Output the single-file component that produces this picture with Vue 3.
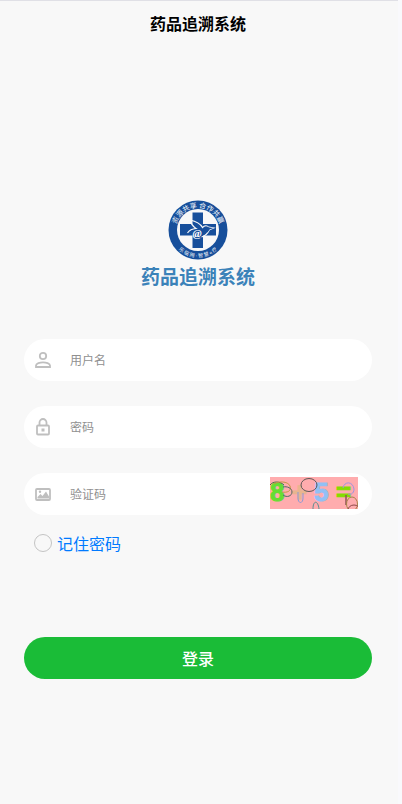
<template>
  <div class="login-page">
    <header class="nav-bar">
      <h1 class="nav-title">药品追溯系统</h1>
    </header>

    <main class="login-content">
      <div class="brand">
        <svg class="brand-logo" viewBox="0 0 60 60" role="img" aria-label="药品追溯系统">
          <defs>
            <path id="arc-top" d="M 7.800 30 A 22.200 22.200 0 0 1 52.200 30" />
            <path id="arc-bottom" d="M 2.500 30 A 27.500 27.500 0 0 0 57.500 30" />
          </defs>
          <circle cx="30" cy="30" r="29.500" fill="#174f9b" />
          <circle cx="30" cy="30" r="21" fill="#f8f8f8" />
          <path d="M24.500 12.500h10.500v11.500h13v11.500h-13v12.500h-10.500v-12.500h-12.500v-11.500h12.500z" fill="#174f9b" />
          <path
            d="M22 20c5 1 10 3 12.500 7.500 2-2 4-2 6-.3l5 .8-4 1.600c-1.500 3.400-4 6.400-8 7.400M22 20c1 4 3 6.500 6 8.500-3.500.2-6.500 1.500-8.500 4.500"
            fill="none"
            stroke="#f8f8f8"
            stroke-width="1.200"
          />
          <path d="M36 27.500c2-1.500 3.500-1.300 5 0l4.500.5-4 1.600-2 3z" fill="#174f9b" />
          <text x="29" y="37" class="logo-at">@</text>
          <text class="logo-text">
            <textPath href="#arc-top" startOffset="50%" text-anchor="middle">资源共享 合作共赢</textPath>
          </text>
          <text class="logo-text logo-text-small">
            <textPath href="#arc-bottom" startOffset="50%" text-anchor="middle">乐 临 网 · 智 慧 e 疗</textPath>
          </text>
        </svg>
        <h2 class="brand-name">药品追溯系统</h2>
      </div>

      <form class="login-form" @submit.prevent="handleLogin">
        <div class="form-item">
          <svg class="item-icon" viewBox="0 0 18 18" aria-hidden="true">
            <circle cx="9" cy="5" r="3.200" />
            <path d="M2 16v-1.500c0-2 4-3.200 7-3.200s7 1.200 7 3.200v1.500z" />
          </svg>
          <input v-model="form.username" type="text" class="item-input" placeholder="用户名" aria-label="用户名" />
        </div>

        <div class="form-item">
          <svg class="item-icon" viewBox="0 0 18 18" aria-hidden="true">
            <rect x="3" y="7.500" width="12" height="9" rx="1" />
            <path d="M5.500 7.500v-3a3.500 3.500 0 0 1 7 0v3" />
            <rect x="7.500" y="10.500" width="3" height="3" class="solid" />
          </svg>
          <input v-model="form.password" type="password" class="item-input" placeholder="密码" aria-label="密码" />
        </div>

        <div class="form-item">
          <svg class="item-icon" viewBox="0 0 18 18" aria-hidden="true">
            <rect x="2" y="4" width="14" height="11" rx="1" />
            <path d="M3.500 13.500v-1.500l3-3 2 2 3.500-4.500 3 5v2z" class="solid" />
            <circle cx="6" cy="6.800" r="1.200" class="solid" />
          </svg>
          <input v-model="form.code" type="text" class="item-input" placeholder="验证码" aria-label="验证码" />
          <button type="button" class="captcha" title="刷新验证码">
            <svg viewBox="0 0 88 32" aria-hidden="true">
              <rect width="88" height="32" fill="#ffacae" />
              <g class="captcha-text">
                <text x="0" y="24" fill="#65dd32" stroke="#65dd32">8</text>
                <text x="22" y="24" fill="#e8b58f" stroke="#e8b58f">+</text>
                <text x="44" y="24" fill="#91c0f5" stroke="#91c0f5">5</text>
                <text x="66" y="24" fill="#85dc00" stroke="#85dc00">=</text>
              </g>
              <g fill="none" stroke-width="1">
                <path d="M0 8c3-4 10-4 14 0" stroke="#4b7045" />
                <path d="M4 7c4-3 14-3 16 2s-3 7-8 6" stroke="#c39842" />
                <path d="M13 10c4-1 9 1 9 5s-5 6-9 3" stroke="#4f6862" />
                <ellipse cx="39" cy="8" rx="8" ry="6.500" stroke="#5c5755" />
                <path d="M28 15v6c0 6 5 6 5 0v-5" stroke="#8999d8" />
                <path d="M43 32c0-9 5-9 6 0" stroke="#598e91" />
                <path d="M73 11c1-7 10-7 11 1 0 5-4 6-6 5" stroke="#a292de" />
                <path d="M76 18v10" stroke="#8f5454" stroke-width="1.500" />
                <ellipse cx="82" cy="27" rx="5.500" ry="7" stroke="#a78448" />
                <ellipse cx="84" cy="33" rx="6" ry="5" stroke="#8f4949" />
              </g>
            </svg>
          </button>
        </div>

        <label class="remember">
          <input v-model="form.remember" type="checkbox" class="remember-box" />
          <span>记住密码</span>
        </label>

        <button type="submit" class="login-btn">登录</button>
      </form>
    </main>
  </div>
</template>

<script setup>
import { reactive } from 'vue';

const emit = defineEmits(['login']);

const form = reactive({
  username: '',
  password: '',
  code: '',
  remember: false
});

function handleLogin() {
  emit('login', { ...form });
}
</script>

<style>
body {
  background: #f9f9fc;
}
</style>

<style scoped>
.login-page {
  box-sizing: border-box;
  min-height: 100vh;
  margin-right: 4px;
  border-top: 1px solid #e0e0e6;
  padding-right: 2px;
  background: #f8f8f8;
  font-family: "Noto Sans CJK SC", sans-serif;
}

.nav-bar {
  display: flex;
  align-items: center;
  justify-content: center;
  height: 44px;
}

.nav-title {
  margin: 0;
  font-size: 16px;
  font-weight: 700;
  line-height: 24px;
  color: #000;
}

.login-content {
  padding: 155px 24px 0;
}

.brand {
  display: flex;
  flex-direction: column;
  align-items: center;
}

.brand-logo {
  width: 60px;
  height: 60px;
}

.logo-text {
  font-family: "Liberation Serif", "Noto Sans CJK SC", serif;
  font-size: 7px;
  fill: #fff;
}

.logo-text-small {
  font-size: 5px;
}

.logo-at {
  font-family: "Liberation Serif", serif;
  font-size: 11px;
  font-style: italic;
  font-weight: 700;
  text-anchor: middle;
  fill: #fff;
}

.brand-name {
  margin: 2px 0 0;
  font-size: 19px;
  font-weight: 700;
  line-height: 28px;
  color: #3b82b9;
}

.login-form {
  display: flex;
  flex-direction: column;
  gap: 25px;
  margin-top: 49px;
}

.form-item {
  display: flex;
  align-items: center;
  box-sizing: border-box;
  height: 42px;
  padding: 0 14px 0 10px;
  border-radius: 21px;
  background: #fff;
}

.item-icon {
  flex: none;
  width: 18px;
  height: 18px;
  fill: none;
  stroke: #bfbfbf;
  stroke-width: 1.8;
}

.solid {
  fill: #bfbfbf;
  stroke: none;
}

.item-input {
  flex: 1;
  min-width: 0;
  height: 24px;
  margin-left: 18px;
  padding: 0 0 2px;
  border: none;
  outline: none;
  background: transparent;
  font-family: inherit;
  font-size: 12px;
  color: #333;
}

.item-input::placeholder {
  color: #909090;
  opacity: 1;
}

.captcha {
  flex: none;
  width: 88px;
  height: 32px;
  margin-bottom: 2px;
  padding: 0;
  border: none;
  background: none;
  cursor: pointer;
}

.captcha svg {
  display: block;
  width: 100%;
  height: 100%;
}

.captcha-text {
  font-family: "Liberation Sans", Arial, sans-serif;
  font-size: 26px;
  font-weight: 700;
}

.remember {
  display: flex;
  align-items: center;
  align-self: flex-start;
  gap: 5px;
  margin: -9px 0 0 10px;
  font-size: 16px;
  line-height: 24px;
  color: #007aff;
  cursor: pointer;
}

.remember-box {
  width: 18px;
  height: 18px;
  margin: 0;
  border: 1px solid #c4c4c4;
  border-radius: 50%;
  appearance: none;
}

.remember-box:checked {
  border: 5px solid #007aff;
}

.login-btn {
  width: 100%;
  height: 42px;
  margin-top: 57px;
  padding: 0;
  border: none;
  border-radius: 21px;
  background: #1abc37;
  font-family: inherit;
  font-size: 16px;
  font-weight: 500;
  color: #fff;
  cursor: pointer;
}
</style>
